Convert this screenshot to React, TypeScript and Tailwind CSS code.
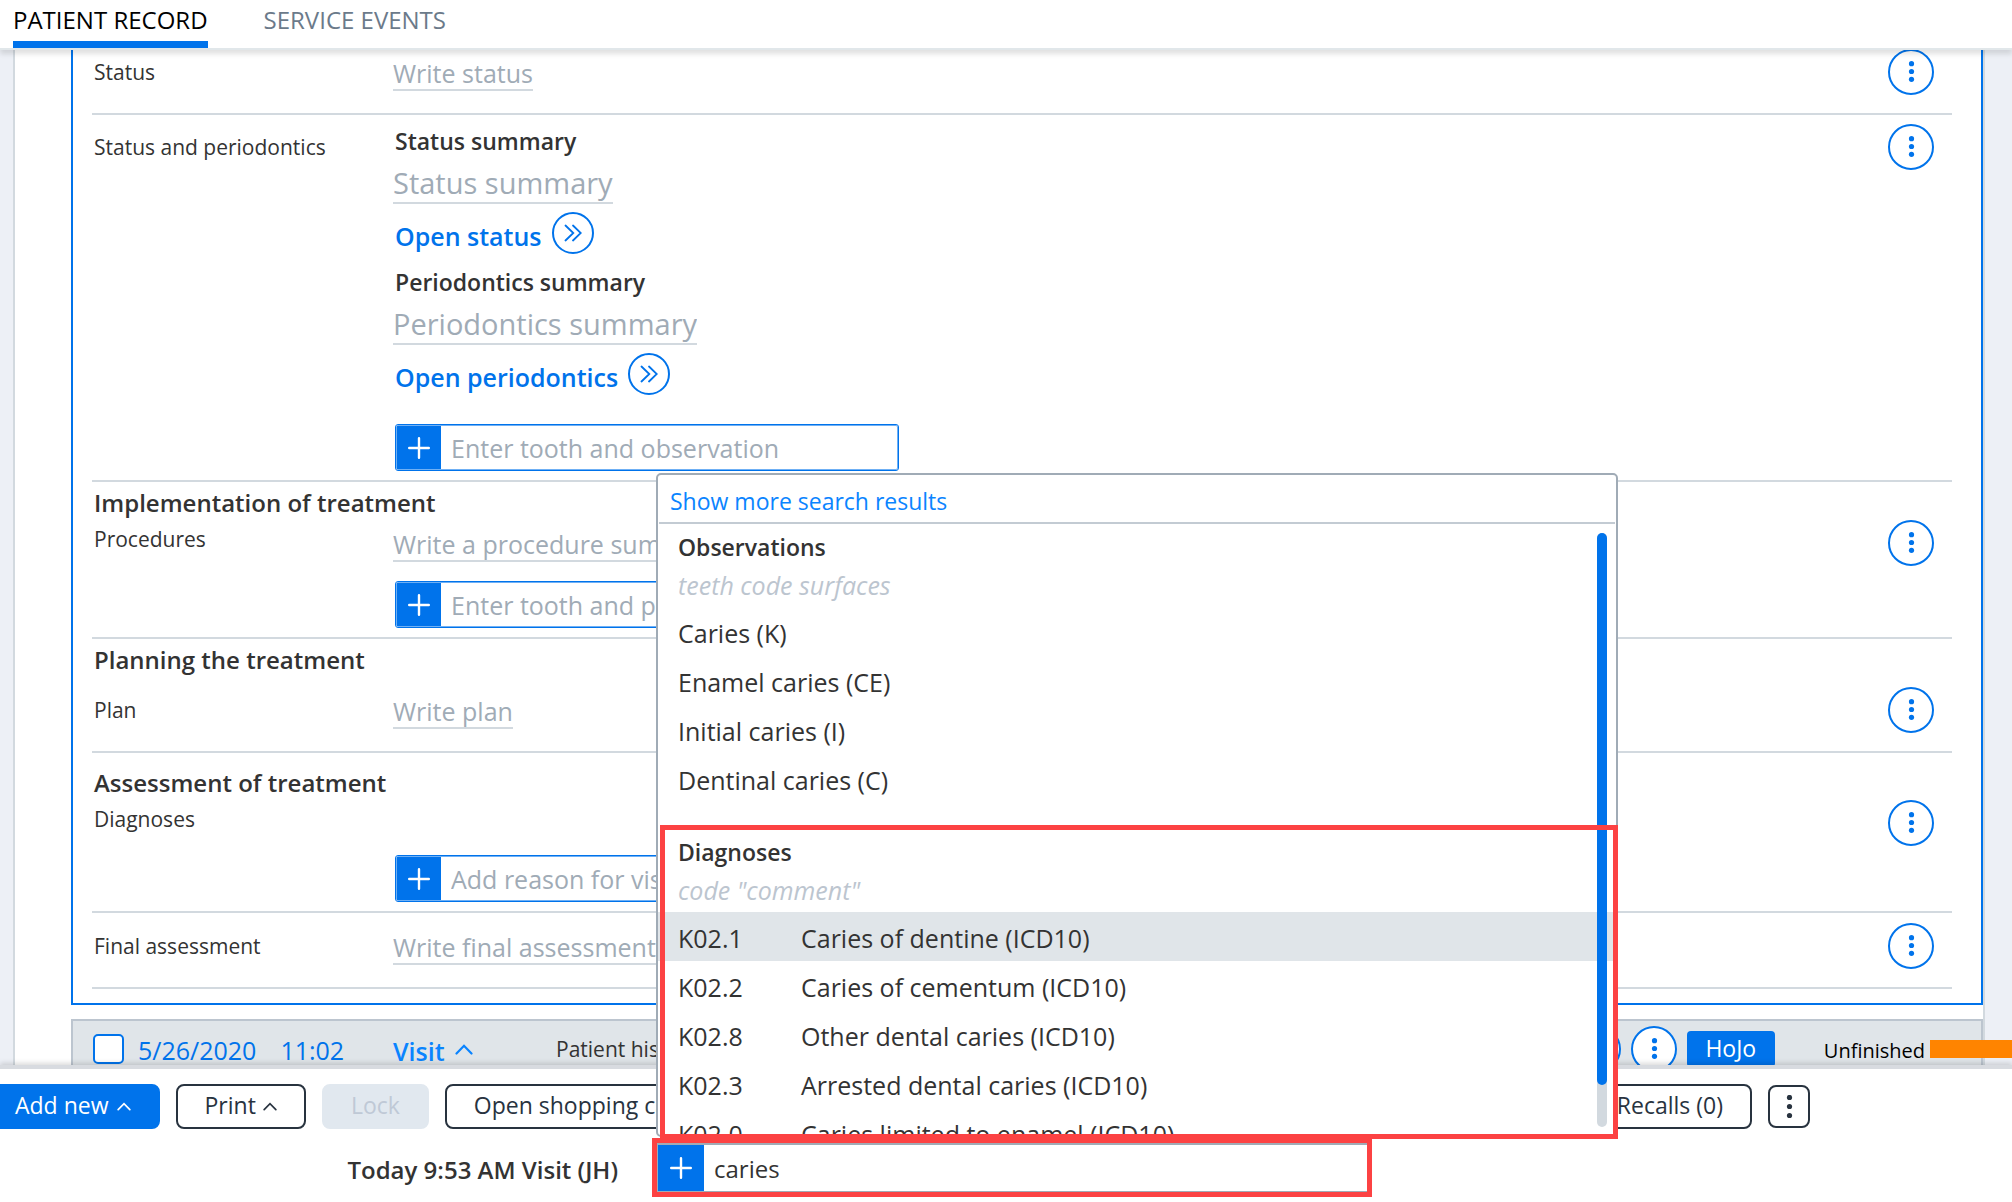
import { useState } from 'react'
import type { ReactNode } from 'react'

const observations = ['Caries (K)', 'Enamel caries (CE)', 'Initial caries (I)', 'Dentinal caries (C)']

const diagnoses = [
  { code: 'K02.1', name: 'Caries of dentine (ICD10)' },
  { code: 'K02.2', name: 'Caries of cementum (ICD10)' },
  { code: 'K02.8', name: 'Other dental caries (ICD10)' },
  { code: 'K02.3', name: 'Arrested dental caries (ICD10)' },
  { code: 'K02.0', name: 'Caries limited to enamel (ICD10)' },
]

function Dots({ step = 7.8 }: { step?: number }) {
  return (
    <svg className="w-6 h-6" viewBox="0 0 24 24" fill="currentColor" aria-hidden="true">
      <circle cx="12.5" cy={11.5 - step} r="2.6" />
      <circle cx="12.5" cy="11.5" r="2.6" />
      <circle cx="12.5" cy={11.5 + step} r="2.6" />
    </svg>
  )
}

function Plus() {
  return (
    <svg className="w-[22px] h-[22px]" viewBox="0 0 22 22" fill="none" stroke="currentColor" strokeWidth="2.4" strokeLinecap="round" aria-hidden="true">
      <path d="M11 1.2v19.6M1.2 11h19.6" />
    </svg>
  )
}

function Caret({ className }: { className: string }) {
  return (
    <svg className={className} viewBox="0 0 18 11" fill="none" stroke="currentColor" strokeWidth="2.2" strokeLinecap="round" aria-hidden="true">
      <path d="M1.5 9.5 9 1.8l7.5 7.7" />
    </svg>
  )
}

function RoundMenu() {
  return (
    <button aria-label="More actions" className="w-[46px] h-[46px] shrink-0 flex items-center justify-center rounded-full border-2 border-[#0073eb] bg-white text-[#0073eb]">
      <Dots />
    </button>
  )
}

function TextField({ label }: { label: string }) {
  return (
    <input aria-label={label} placeholder={label} className="block field-sizing-content h-[35px] text-[25px] leading-[33px] border-b-2 border-[#d2d9df] placeholder:text-[#a0abb6] outline-none" />
  )
}

function SummaryField({ label }: { label: string }) {
  return (
    <input aria-label={label} placeholder={label} className="block field-sizing-content mt-[5px] h-[41px] text-[29px] leading-[39px] border-b-2 border-[#d2d9df] placeholder:text-[#a0abb6] outline-none" />
  )
}

function OpenLink({ children }: { children: ReactNode }) {
  return (
    <a href="#" className="ml-0.5 mt-2 flex w-fit items-end gap-2.5 text-[25px] leading-[34px] font-semibold text-[#0073eb]">
      <span className="pb-px">{children}</span>
      <span className="w-[42px] h-[42px] flex items-center justify-center rounded-full border-2 border-[#0073eb]">
        <svg className="w-[18px] h-[18px]" viewBox="0 0 18 18" fill="none" stroke="currentColor" strokeWidth="1.8" strokeLinecap="round" aria-hidden="true">
          <path d="M1.5 1.5 9.3 9l-7.8 7.5M9 1.5 16.8 9 9 16.5" />
        </svg>
      </span>
    </a>
  )
}

function AddField({ placeholder }: { placeholder: string }) {
  return (
    <div className="ml-0.5 w-[504px] h-[47px] rounded-[3px] border border-[#0073eb]">
      <div className="h-full flex rounded-[2px] border border-[#6fb0f5]">
        <button aria-label="Add" className="w-11 shrink-0 flex items-center justify-center bg-[#0073eb] text-white">
          <Plus />
        </button>
        <input aria-label={placeholder} placeholder={placeholder} className="flex-1 min-w-0 px-2.5 pt-0.5 text-[25px] placeholder:text-[#a0abb6] outline-none" />
      </div>
    </div>
  )
}

function Row({ label, compact, className, children }: { label: string; compact?: boolean; className?: string; children: ReactNode }) {
  return (
    <div className={`grid grid-cols-[301px_1fr_auto] items-start pr-[18px] ${className ?? ''}`}>
      <span className={`pl-0.5 text-[21px] leading-[30px] ${compact ? 'pt-1' : 'pt-2'}`}>{label}</span>
      <div>{children}</div>
      <RoundMenu />
    </div>
  )
}

function SectionTitle({ className, children }: { className: string; children: ReactNode }) {
  return <h2 className={`pl-0.5 text-2xl leading-[34px] font-semibold ${className}`}>{children}</h2>
}

function SearchResults() {
  const [active, setActive] = useState('K02.1')

  return (
    <div className="absolute -left-px bottom-[55px] w-[962px] h-[664px] flex flex-col rounded-[5px] border-2 border-[#a0abb6] bg-white text-[25px] text-[#333]">
      <a href="#" className="mx-px pl-[11px] pt-[9px] h-[49px] shrink-0 border-b-2 border-[#c3cbd3] text-[23px] leading-[34px] text-[#0a84ff]">
        Show more search results
      </a>
      <div className="flex-1 min-h-0 overflow-hidden pt-1.5">
        <h3 className="pl-5 text-[23px] leading-[34px] font-semibold">Observations</h3>
        <p className="pl-5 mt-1 mb-[5px] leading-[34px] italic text-[#bcc5cf]">teeth code surfaces</p>
        <ul>
          {observations.map(o => (
            <li key={o} className="h-[49px] pl-5 pt-1 flex items-center">{o}</li>
          ))}
        </ul>
        <h3 className="pl-5 mt-8 text-[23px] leading-[34px] font-semibold">Diagnoses</h3>
        <p className="pl-5 mt-1 mb-[5px] leading-[34px] italic text-[#bcc5cf]">code "comment"</p>
        <ul>
          {diagnoses.map(d => (
            <li key={d.code} onMouseEnter={() => setActive(d.code)} className={`h-[49px] pl-5 pt-1 flex items-center ${active === d.code ? 'bg-[#e0e5e9]' : ''}`}>
              <span className="w-[123px]">{d.code}</span>
              {d.name}
            </li>
          ))}
        </ul>
      </div>
      {/* scrollbar */}
      <div className="absolute right-[9px] top-[58px] bottom-2 w-2.5 rounded-full bg-[#d2d9df]">
        <div className="h-[93%] rounded-full bg-[#0073eb]" />
      </div>
      {/* highlight round the diagnoses */}
      <div className="absolute left-0.5 -right-0.5 top-[350px] -bottom-1 border-5 border-[#fc4243] pointer-events-none" />
    </div>
  )
}

export default function App() {
  const [query, setQuery] = useState('caries')

  return (
    <div className="h-screen flex flex-col overflow-hidden bg-white font-['Open_Sans','Noto_Sans',sans-serif] text-[#333]">
      <header className="relative z-10 h-[50px] shrink-0 flex gap-14 pl-[13px] border-b-2 border-[#e1e7ea] bg-white shadow-[0_4px_5px_rgba(0,0,0,0.12)] text-2xl leading-[39px]">
        <a href="#" className="border-b-7 border-[#0073eb] text-black">PATIENT RECORD</a>
        <a href="#" className="text-[#6b7a8a]">SERVICE EVENTS</a>
      </header>

      <main className="flex-1 min-h-0 overflow-hidden bg-[#edf0f6]">
        <div className="ml-[13px] mr-[27px] pl-14 border-x-2 border-[#d2d9df] bg-white">
          <div className="-mt-1 pl-[19px] pr-[29px] pb-3.5 border-2 border-t-0 border-[#0073eb]">
            <div className="divide-y-2 divide-[#d2d9df] border-b-2 border-[#d2d9df]">
              <Row label="Status" className="h-[69px] pt-[3px]">
                <div className="pt-[7px]"><TextField label="Write status" /></div>
              </Row>

              <Row label="Status and periodontics" className="pt-[9px] pb-[9px]">
                <h3 className="pl-0.5 text-[23px] leading-[34px] font-semibold">Status summary</h3>
                <SummaryField label="Status summary" />
                <OpenLink>Open status</OpenLink>
                <h3 className="mt-[11px] pl-0.5 text-[23px] leading-[34px] font-semibold">Periodontics summary</h3>
                <SummaryField label="Periodontics summary" />
                <OpenLink>Open periodontics</OpenLink>
                <div className="mt-[29px]"><AddField placeholder="Enter tooth and observation" /></div>
              </Row>

              <section>
                <SectionTitle className="pt-1">Implementation of treatment</SectionTitle>
                <Row label="Procedures" compact className="pb-[9px]">
                  <div className="pt-[7px] pb-[19px]"><TextField label="Write a procedure summary" /></div>
                  <AddField placeholder="Enter tooth and procedure" />
                </Row>
              </section>

              <section>
                <SectionTitle className="pt-1">Planning the treatment</SectionTitle>
                <Row label="Plan" className="pt-2.5 h-[74px]">
                  <div className="pt-[7px]"><TextField label="Write plan" /></div>
                </Row>
              </section>

              <section>
                <SectionTitle className="pt-[13px]">Assessment of treatment</SectionTitle>
                <Row label="Diagnoses" compact className="pb-[9px]">
                  <div className="pt-[55px]"><AddField placeholder="Add reason for visit" /></div>
                </Row>
              </section>

              <Row label="Final assessment" className="h-[74px] pt-2.5">
                <div className="pt-[7px]"><TextField label="Write final assessment" /></div>
              </Row>
            </div>
          </div>

          {/* Next visit */}
          <div className="mt-3.5 h-[60px] pl-5 flex items-center border-2 border-[#bcc5cf] bg-[#e0e5e9] text-[25px] leading-[34px] text-[#0073eb]">
            <div className="w-[300px] flex items-center">
              <input type="checkbox" aria-label="Select visit" className="appearance-none w-[31px] h-[30px] rounded-[5px] border-2 border-[#0073eb] bg-white" />
              <span className="ml-3.5 pt-0.5">5/26/2020</span>
              <span className="ml-6 pt-0.5">11:02</span>
            </div>
            <button className="w-[163px] pt-1 flex items-center gap-2.5 font-semibold text-[#0a84ff]">
              Visit
              <Caret className="w-[18px] h-[11px] -mt-1" />
            </button>
            <span className="text-[21px] text-[#333]">Patient history</span>
            <div className="ml-auto flex items-center gap-2.5">
              <RoundMenu />
              <RoundMenu />
              <button className="w-[88px] h-9 rounded-[4px] bg-[#0073eb] pb-0.5 text-[23px] text-white">HoJo</button>
            </div>
            <span className="ml-[49px] mr-[5px] pt-1 text-xl leading-[30px] text-black">Unfinished</span>
            <span className="relative -mr-[31px] w-[82px] h-[18px] bg-[#ff8400]" />
          </div>
        </div>
      </main>

      <footer className="relative z-10 shrink-0 border-t-4 border-[#d8dbe0] bg-white shadow-[0_-2px_5px_rgba(0,0,0,0.15)] text-[23px] text-[#28333f]">
        <div className="-ml-3.5 pt-[15px] flex items-center gap-4 *:shrink-0">
          <button className="h-[45px] px-[27px] pb-0.5 flex items-center gap-2 rounded-[8px] border-2 border-[#0073eb] bg-[#0073eb] text-white">
            Add new
            <Caret className="w-3.5 h-[9px] mt-0.5" />
          </button>
          <button className="h-[45px] px-[27px] pb-0.5 flex items-center gap-[7px] rounded-[8px] border-2 border-[#28333f]">
            Print
            <Caret className="w-3.5 h-[9px] mt-0.5" />
          </button>
          <button disabled className="h-[45px] px-[27px] pb-0.5 rounded-[8px] border-2 border-[#e1e8ef] bg-[#e1e8ef] text-[#bfc9d6]">Lock</button>
          <button className="h-[45px] px-[27px] pb-0.5 rounded-[8px] border-2 border-[#28333f]">Open shopping cart</button>
          <button className="ml-auto h-[45px] px-[27px] pb-0.5 rounded-[8px] border-2 border-[#28333f]">Recalls (0)</button>
          <button aria-label="More" className="mr-[202px] w-[42px] h-[43px] flex items-center justify-center rounded-[8px] border-2 border-[#28333f]">
            <Dots step={9} />
          </button>
        </div>

        <div className="mt-[9px] mb-[5px] flex items-center">
          <label htmlFor="entry" className="w-[652px] shrink-0 pr-[34px] pt-1 text-right text-2xl font-semibold text-[#333]">Today 9:53 AM Visit (JH)</label>
          <div className="relative w-[720px] h-[59px] border-5 border-[#fc4243]">
            <div className="h-full flex border-t-2 border-l border-b border-[#a0abb6]">
              <button aria-label="Add entry" className="w-[46px] shrink-0 flex items-center justify-center bg-[#0073eb] text-white">
                <Plus />
              </button>
              <input id="entry" value={query} onChange={e => setQuery(e.target.value)} className="flex-1 min-w-0 px-2.5 pt-0.5 text-2xl text-[#333] outline-none" />
            </div>
            <SearchResults />
          </div>
        </div>
      </footer>
    </div>
  )
}
